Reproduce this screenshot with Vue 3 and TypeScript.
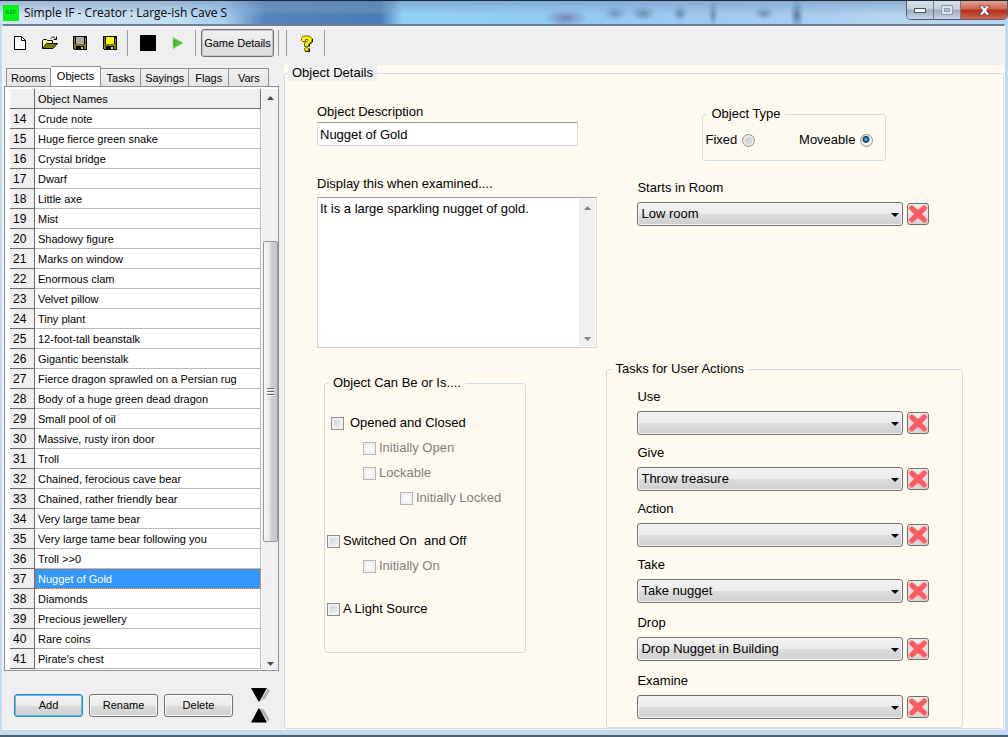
<script setup lang="ts">
import { ref } from 'vue'

interface TaskField {
  id: string
  label: string
  value: string
  loose?: boolean
}

interface Flag {
  id: string
  label: string
  level: string
  disabled?: boolean
}

const tabs = ['Rooms', 'Objects', 'Tasks', 'Sayings', 'Flags', 'Vars']
const activeTab = ref('Objects')

const crossPath = 'M1 3L4 1l6 5 6-5 3 2v2l-5 5 5 5v2l-3 2-6-5-6 5-3-2v-2l5-5-5-5z'

const firstNumber = 14
const objects = [
  'Crude note', 'Huge fierce green snake', 'Crystal bridge', 'Dwarf', 'Little axe', 'Mist',
  'Shadowy figure', 'Marks on window', 'Enormous clam', 'Velvet pillow', 'Tiny plant',
  '12-foot-tall beanstalk', 'Gigantic beenstalk', 'Fierce dragon sprawled on a Persian rug',
  'Body of a huge green dead dragon', 'Small pool of oil', 'Massive, rusty iron door', 'Troll',
  'Chained, ferocious cave bear', 'Chained, rather friendly bear', 'Very large tame bear',
  'Very large tame bear following you', 'Troll >>0', 'Nugget of Gold', 'Diamonds',
  'Precious jewellery', 'Rare coins', "Pirate's chest",
]
const selected = ref('Nugget of Gold')

const description = ref('Nugget of Gold')
const examined = ref('It is a large sparkling nugget of gold.')
const objectType = ref('moveable')
const room = ref('Low room')

const flags: Flag[] = [
  { id: 'opened', label: 'Opened and Closed', level: 'wide' },
  { id: 'open', label: 'Initially Open', level: 'sub', disabled: true },
  { id: 'lockable', label: 'Lockable', level: 'sub', disabled: true },
  { id: 'locked', label: 'Initially Locked', level: 'subsub', disabled: true },
  { id: 'switched', label: 'Switched On  and Off', level: 'top' },
  { id: 'on', label: 'Initially On', level: 'sub', disabled: true },
  { id: 'light', label: 'A Light Source', level: 'top' },
]

const tasks = ref<TaskField[]>([
  { id: 'use', label: 'Use', value: '' },
  { id: 'give', label: 'Give', value: 'Throw treasure' },
  { id: 'action', label: 'Action', value: '' },
  { id: 'take', label: 'Take', value: 'Take nugget' },
  { id: 'drop', label: 'Drop', value: 'Drop Nugget in Building', loose: true },
  { id: 'examine', label: 'Examine', value: '', loose: true },
])
</script>

<template>
  <div class="window">
    <header class="titlebar">
      <span class="app-icon">SIF</span>
      <h1 class="title">Simple IF - Creator : Large-ish Cave S</h1>
      <div class="window-buttons">
        <button type="button" class="win-btn" aria-label="Minimize">
          <svg width="14" height="8" viewBox="0 0 14 8"><rect x="1.500" y="2.500" width="11" height="4" fill="#fff" stroke="#4c5766" /></svg>
        </button>
        <button type="button" class="win-btn" aria-label="Maximize">
          <svg width="12" height="10" viewBox="0 0 12 10"><path d="M.5.5h11v9H.5z" fill="#dde5ee" stroke="#8f9cab" /><path d="M3.500 3.500h5v3h-5z" fill="#b3c0ce" stroke="#8f9cab" /></svg>
        </button>
        <button type="button" class="win-btn close" aria-label="Close">
          <svg width="13" height="11" viewBox="0 0 13 11"><path d="M1 .8h3.600l1.900 2.200L8.400.8H12L8.500 5.400 12 10.200H8.400L6.500 7.800l-1.900 2.400H1l3.500-4.800z" fill="#fff" stroke="#5b3a3e" stroke-width=".9" /></svg>
        </button>
      </div>
    </header>

    <div class="client">
      <nav class="toolbar" aria-label="Toolbar">
        <button type="button" class="tool" aria-label="New">
          <svg width="16" height="16" viewBox="0 0 16 16"><path d="M2.500 1.500h7l4 4v9h-11z" fill="#fff" stroke="#000" /><path d="M9.500 1.500v4h4" fill="none" stroke="#000" /></svg>
        </button>
        <button type="button" class="tool" aria-label="Open">
          <svg width="16" height="16" viewBox="0 0 16 16"><path d="M.5 13.500v-8l1-1h3l1 1h5v3" fill="#ffff9c" stroke="#000" /><path d="M.5 13.500l4-5h11l-4.500 5z" fill="#808000" stroke="#000" /><path d="M9 3.500c1-2 3-2 4.500 0M14.500 1.500v3h-3" fill="none" stroke="#000" /></svg>
        </button>
        <button v-for="kind in ['grey', 'yellow']" :key="kind" type="button" class="tool" :aria-label="kind === 'grey' ? 'Save' : 'Save as'">
          <svg width="16" height="16" viewBox="0 0 16 16" shape-rendering="crispEdges">
            <path d="M1 1h14v14H2l-1-1z" fill="#000" /><path d="M2 2h1v12H2zM13 3h1v11h-1zM3 9h10v5H3z" fill="#808000" />
            <path d="M4 2h8v7H4z" :class="['shutter', kind]" /><path d="M4 11h8v4H4z" fill="#000" /><path d="M9 12h2v2H9z" fill="#d8d8d8" />
          </svg>
        </button>
        <span class="sep" />
        <button type="button" class="tool" aria-label="Stop">
          <svg width="16" height="16" viewBox="0 0 16 16"><path d="M0 0h16v16H0z" /></svg>
        </button>
        <button type="button" class="tool" aria-label="Run">
          <svg width="12" height="12" viewBox="0 0 12 12"><path d="M1 .5L11 6 1 11.500z" fill="#4fc02f" stroke="#8bd274" /><path d="M2.500 3v6" stroke="#2f9b28" /></svg>
        </button>
        <span class="sep" />
        <button type="button" class="game-details">Game Details</button>
        <span class="sep" />
        <span class="sep" />
        <button type="button" class="tool" aria-label="Help">
          <svg width="14" height="17" viewBox="0 0 14 17"><path d="M1.500 5.500v-2l2-2.500h6l2.500 2.500v3L8.500 9v2.500h-4V8L8 5.500v-1H5.500v2h-3z" fill="#ff0" stroke="#6b6400" /><path d="M12.500 4v3L9.500 9.500v2M5 16.500h4.500v-3" fill="none" stroke="#000" /><rect x="4.500" y="12.800" width="4" height="3.200" rx="1" fill="#ff0" stroke="#6b6400" /></svg>
        </button>
        <span class="sep" />
      </nav>

      <div class="body">
        <section class="sidebar">
          <div class="tabs" role="tablist">
            <button
              v-for="tab in tabs" :key="tab" type="button" role="tab"
              :aria-selected="tab === activeTab" :class="['tab', { active: tab === activeTab }]"
              @click="activeTab = tab"
            >{{ tab }}</button>
          </div>
          <div class="list-panel">
            <table class="grid">
              <thead>
                <tr><th class="num"></th><th class="name">Object Names</th></tr>
              </thead>
              <tbody>
                <tr v-for="(name, i) in objects" :key="name" :class="{ selected: name === selected }" @click="selected = name">
                  <th class="num" scope="row">{{ firstNumber + i }}</th>
                  <td class="name">{{ name }}</td>
                </tr>
              </tbody>
            </table>
            <div class="scroll">
              <svg class="arrow" width="7" height="4" viewBox="0 0 7 4"><path d="M0 4l3.500-4L7 4z" /></svg>
              <div class="track"><div class="thumb"><i /><i /><i /></div></div>
              <svg class="arrow" width="7" height="4" viewBox="0 0 7 4"><path d="M0 0h7L3.500 4z" /></svg>
            </div>
          </div>
          <div class="actions">
            <button type="button" class="btn default">Add</button>
            <button type="button" class="btn">Rename</button>
            <button type="button" class="btn">Delete</button>
            <div class="movers">
              <button type="button" class="move" aria-label="Move down">
                <svg width="19" height="15" viewBox="0 0 19 15"><path d="M17.500 2L11 13.500M15.500 5v2M18 3.500L13 12" stroke="#b0b0b0" stroke-width="1.500" fill="none" /><path d="M0 1h16L8.500 14.500h-1z" /></svg>
              </button>
              <button type="button" class="move" aria-label="Move up">
                <svg width="19" height="15" viewBox="0 0 19 15"><path d="M10 1l7.500 12M12 1.500l6 10.500" stroke="#b0b0b0" stroke-width="1.500" fill="none" /><path d="M7.500.5h1L16 14.500H0z" /></svg>
              </button>
            </div>
          </div>
        </section>

        <main class="content">
          <fieldset class="details">
            <legend class="grey">Object Details</legend>
            <div class="columns">
              <div class="col-left">
                <label for="desc">Object Description</label>
                <input id="desc" v-model="description" class="text" type="text">
                <label for="exam" class="exam-label">Display this when examined....</label>
                <div class="memo">
                  <textarea id="exam" v-model="examined" />
                  <div class="memo-scroll">
                    <svg width="7" height="4" viewBox="0 0 7 4"><path d="M0 4l3.500-4L7 4z" /></svg>
                    <svg width="7" height="4" viewBox="0 0 7 4"><path d="M0 0h7L3.500 4z" /></svg>
                  </div>
                </div>
                <fieldset class="group flags">
                  <legend>Object Can Be or Is....</legend>
                  <label v-for="flag in flags" :key="flag.id" :class="['flag', flag.level, { disabled: flag.disabled }]">
                    <input type="checkbox" :disabled="flag.disabled"><span>{{ flag.label }}</span>
                  </label>
                </fieldset>
              </div>

              <div class="col-right">
                <fieldset class="group types">
                  <legend>Object Type</legend>
                  <label>Fixed <input v-model="objectType" type="radio" name="type" value="fixed"></label>
                  <label>Moveable <input v-model="objectType" type="radio" name="type" value="moveable"></label>
                </fieldset>
                <div class="field start">
                  <label for="room">Starts in Room</label>
                  <div class="pick">
                    <div class="combo">
                      <select id="room" v-model="room"><option>Low room</option></select>
                      <svg width="8" height="4" viewBox="0 0 8 4"><path d="M0 0h8L4 4z" /></svg>
                    </div>
                    <button type="button" class="clear" aria-label="Clear starting room">
                      <svg width="20" height="20" viewBox="0 0 20 20"><path :d="crossPath" /></svg>
                    </button>
                  </div>
                </div>
                <fieldset class="group tasks">
                  <legend>Tasks for User Actions</legend>
                  <div class="task-list">
                    <div v-for="task in tasks" :key="task.id" :class="['field', { loose: task.loose }]">
                      <label :for="task.id">{{ task.label }}</label>
                      <div class="pick">
                        <div class="combo">
                          <select :id="task.id" v-model="task.value"><option>{{ task.value }}</option></select>
                          <svg width="8" height="4" viewBox="0 0 8 4"><path d="M0 0h8L4 4z" /></svg>
                        </div>
                        <button type="button" class="clear" :aria-label="`Clear ${task.label}`" @click="task.value = ''">
                          <svg width="20" height="20" viewBox="0 0 20 20"><path :d="crossPath" /></svg>
                        </button>
                      </div>
                    </div>
                  </div>
                </fieldset>
              </div>
            </div>
          </fieldset>
        </main>
      </div>
    </div>
  </div>
</template>

<style>
html, body { margin: 0; background: #c3d9ee; }
</style>

<style scoped>
* { box-sizing: border-box; }
.window {
  display: flex;
  flex-direction: column;
  min-height: 100vh;
  padding: 0 3px 5px 2px;
  border-top: 1px solid #1c2738;
  border-bottom: 2px solid #4d6070;
  background: #c3d9ee;
  font: 11px/16px "Liberation Sans", Arial, sans-serif;
  color: #000;
}
button, input, select, textarea { font: inherit; color: inherit; margin: 0; }
button { padding: 0; border: 0; background: none; }

.titlebar {
  display: flex;
  align-items: center;
  height: 23px;
  margin: 0 -3px 0 -2px;
  padding-left: 3px;
  background:
    linear-gradient(rgba(110, 140, 180, .5), rgba(140, 170, 205, .35) 40%, rgba(255, 255, 255, 0) 60%),
    radial-gradient(ellipse 22px 9px at 566px 17px, rgba(110, 110, 165, .75), transparent),
    radial-gradient(ellipse 12px 8px at 615px 12px, rgba(70, 100, 140, .5), transparent),
    radial-gradient(ellipse 12px 8px at 643px 12px, rgba(70, 100, 140, .6), transparent),
    radial-gradient(ellipse 8px 8px at 680px 12px, rgba(70, 100, 140, .6), transparent),
    radial-gradient(ellipse 5px 14px at 713px 12px, rgba(70, 100, 140, .6), transparent),
    radial-gradient(ellipse 10px 7px at 764px 12px, rgba(70, 100, 140, .6), transparent),
    radial-gradient(ellipse 7px 16px at 797px 13px, rgba(60, 85, 125, .7), transparent),
    linear-gradient(90deg, #d5e6f5 0, #c2dcf2 180px, #a5cdee 225px, #5584bb 265px, #4b7bb4 380px, #91d0f6 402px, #8fcbf3 540px, #9dc8ee 700px, #a4cdf0 800px, #b7d5f0 900px);
}
.app-icon {
  width: 16px;
  height: 16px;
  background: #00f51c;
  color: #067a10;
  font: 6px/16px "Liberation Mono", monospace;
  text-align: center;
}
.title { flex: 1; margin: 0 0 0 5px; font: 12px/20px "Open Sans", "Noto Sans", sans-serif; white-space: nowrap; }
.window-buttons {
  display: flex;
  align-self: flex-start;
  height: 19px;
  border: 1px solid #4e5f74;
  border-top: 0;
  border-radius: 0 0 5px 5px;
  overflow: hidden;
}
.win-btn {
  display: flex;
  align-items: center;
  justify-content: center;
  width: 27px;
  background: linear-gradient(#d8e2ec, #c3cfdd 45%, #9dacbf 50%, #c6d5e4);
  border-right: 1px solid #6b7c90;
}
.win-btn.close { width: 46px; border-right: 0; background: linear-gradient(#e5a493, #cf6650 45%, #b62e1a 50%, #d0664a); }

.client {
  flex: 1;
  display: flex;
  flex-direction: column;
  border: 1px solid #f4f8fc;
  border-top: 2px solid #6c7f96;
  background: #efefef;
}
.toolbar { display: flex; align-items: center; height: 39px; padding: 0 0 5px 2px; }
.tool { display: flex; align-items: center; justify-content: center; width: 30px; height: 28px; }
.sep { width: 1px; height: 26px; margin: 0 5px 0 2px; background: #9b9b9b; }
.shutter.grey { fill: #a9a9a9; }
.shutter.yellow { fill: #ff0; }
.game-details {
  width: 73px;
  height: 28px;
  margin-right: 2px;
  border: 1px solid #707070;
  border-radius: 3px;
  background: linear-gradient(#f0f0f0, #e9e9e9 50%, #dcdcdc 52%, #e2e2e2);
  box-shadow: inset 0 0 0 1px #c4c4c4;
  white-space: nowrap;
}

.body { flex: 1; display: flex; }
.sidebar { flex: none; width: 281px; padding: 1px 5px 0 1px; }
.tabs { display: flex; align-items: flex-end; height: 20px; padding-left: 2px; }
.tab {
  min-width: 40px;
  height: 18px;
  padding: 0 4px;
  border: 1px solid #8b8f96;
  border-left-width: 0;
  border-bottom: 0;
  background: linear-gradient(#f2f2f2, #e4e4e4);
}
.tab:first-child { border-left-width: 1px; }
.tab.active { height: 20px; padding: 0 6px 2px; background: #fff; }
.list-panel {
  display: flex;
  padding: 2px 0 1px 5px;
  border: 1px solid #8b8f96;
  background: #fff;
}
.grid { flex: 1; border-collapse: separate; border-spacing: 0; }
.grid tr { height: 20px; }
.grid th, .grid td { height: 20px; padding: 0 3px; text-align: left; font-weight: normal; line-height: 18px; white-space: nowrap; border-bottom: 1px solid #b9b9b9; }
.grid .num { width: 25px; background: #efefef; border-right: 1px solid #6c6c6c; border-bottom-color: #6c6c6c; font-size: 12px; }
.grid .name { border-right: 1px solid #b9b9b9; }
.grid thead .name { background: #efefef; border-color: #6c6c6c; }
.selected .name { background: #3397fd; color: #fff; outline: 1px dotted #c8643c; outline-offset: -1px; }
.scroll { display: flex; flex-direction: column; align-items: center; width: 16px; padding: 7px 0 3px; margin-left: 1px; background: #f0f0f0; }
.arrow { fill: #4a4a4a; }
.track { flex: 1; width: 15px; padding-top: 141px; }
.thumb {
  display: flex;
  flex-direction: column;
  justify-content: center;
  align-items: center;
  gap: 1px;
  height: 301px;
  border: 1px solid #979797;
  border-radius: 2px;
  background: linear-gradient(90deg, #f5f5f5, #e6e6e8 45%, #cfcfd3 55%, #c6c6cc);
}
.thumb i { width: 7px; height: 2px; border-top: 1px solid #666; background: #fff; }

.actions { display: flex; align-items: center; gap: 6px; padding: 16px 0 0 10px; }
.btn {
  width: 69px;
  height: 23px;
  border: 1px solid #707070;
  border-radius: 3px;
  background: linear-gradient(#f2f2f2, #ebebeb 50%, #dddddd 50%, #cfcfcf);
  box-shadow: inset 0 0 0 1px #fbfbfb;
}
.btn.default { border-color: #3c7fb1; box-shadow: inset 0 0 0 1px #48c8f0; }
.movers { display: flex; flex-direction: column; gap: 6px; margin-left: 12px; }
.move { display: flex; }

.content { flex: 1; display: flex; background: #fffaf0; font-size: 13px; }
fieldset { min-width: 0; margin: 0; padding: 0; border: 1px solid #d3dbe2; border-radius: 3px; }
legend { height: 16px; padding: 0 4px; line-height: 16px; }
.details { flex: 1; }
.details > legend { margin-left: 3px; }
legend.grey { background: #f0f0f0; }
.columns { display: grid; grid-template-columns: 321fr 396fr; }
.col-left { display: flex; flex-direction: column; padding: 23px 9px 0 32px; }
.text {
  width: 100%;
  max-width: 261px;
  height: 24px;
  margin-top: 2px;
  padding: 0 2px;
  border: 1px solid #d9dbdf;
  border-top-color: #9a9a9e;
  background: #fff;
}
.exam-label { margin-top: 30px; }
.memo { display: flex; max-width: 280px; height: 151px; margin-top: 5px; border: 1px solid #d4d6dc; border-top-color: #9a9a9e; background: #fff; }
.memo textarea { flex: 1; min-width: 0; padding: 3px 2px; border: 0; outline: 0; resize: none; background: none; overflow: hidden; }
.memo-scroll { display: flex; flex-direction: column; justify-content: space-between; align-items: center; width: 16px; margin: 1px; padding: 7px 0 5px; background: #efefef; fill: #808080; }

.flags { display: flex; flex-direction: column; gap: 9px; width: 202px; margin: 27px 0 0 7px; padding: 24px 0 35px; }
.group legend { margin-left: 4px; }
.flag { display: flex; align-items: center; gap: 3px; white-space: pre; padding-left: 2px; }
.flag.wide { gap: 6px; padding-left: 6px; }
.flag.sub { padding-left: 38px; }
.flag.subsub { padding-left: 75px; }
.flag.top { margin-top: 18px; }
.flag.disabled { color: #808080; }
input[type="checkbox"] {
  appearance: none;
  width: 13px;
  height: 13px;
  border: 1px solid #8e8f8f;
  background: linear-gradient(135deg, #c9ced6, #f4f5f6);
  box-shadow: inset 0 0 0 2px #f1f1f1;
}
input[type="checkbox"]:checked { background: #315c94; }
input[type="checkbox"]:disabled { border-color: #b5b5b5; background: #fafafa; }

.col-right { display: flex; flex-direction: column; padding-top: 25px; }
.types { display: flex; justify-content: space-between; width: 184px; margin-left: 96px; padding: 10px 12px 12px 2px; }
.types legend { margin-left: 2px; }
.types label { display: flex; align-items: center; gap: 5px; }
input[type="radio"] {
  appearance: none;
  width: 13px;
  height: 13px;
  border: 1px solid #8e8f8f;
  border-radius: 50%;
  background: radial-gradient(circle, #d4d4d6 30%, #f3f3f3 75%);
}
input[type="radio"]:checked { background: radial-gradient(circle at 45% 40%, #8fd3f5 0, #1c5f8c 2px, #123b5a 3px, #f0f2f4 4px); }
.start { margin: 19px 41px 0 31px; }
.field > label { display: block; height: 16px; }
.pick { display: flex; align-items: center; gap: 4px; margin-top: 6px; }
.combo { position: relative; flex: 1; max-width: 266px; }
.combo svg { position: absolute; right: 4px; top: 11px; pointer-events: none; }
select {
  display: block;
  appearance: none;
  width: 100%;
  height: 24px;
  padding: 0 16px 0 3px;
  border: 1px solid #707070;
  border-radius: 3px;
  background: linear-gradient(#f2f2f2, #ebebeb 50%, #dddddd 50%, #cfcfcf);
  box-shadow: inset 0 0 0 1px #f6f6f6;
}
.clear {
  display: flex;
  align-items: center;
  justify-content: center;
  width: 22px;
  height: 22px;
  border: 1px solid #707070;
  border-radius: 3px;
  background: linear-gradient(#ececec, #d6d6d6);
}
.clear svg { fill: #fb5a5e; stroke: #fb9c9a; }
.tasks { max-width: 357px; margin-top: 135px; }
.task-list { padding: 12px 33px 8px 30px; }
.field + .field { margin-top: 10px; }
.field + .field.loose { margin-top: 12px; }
</style>
